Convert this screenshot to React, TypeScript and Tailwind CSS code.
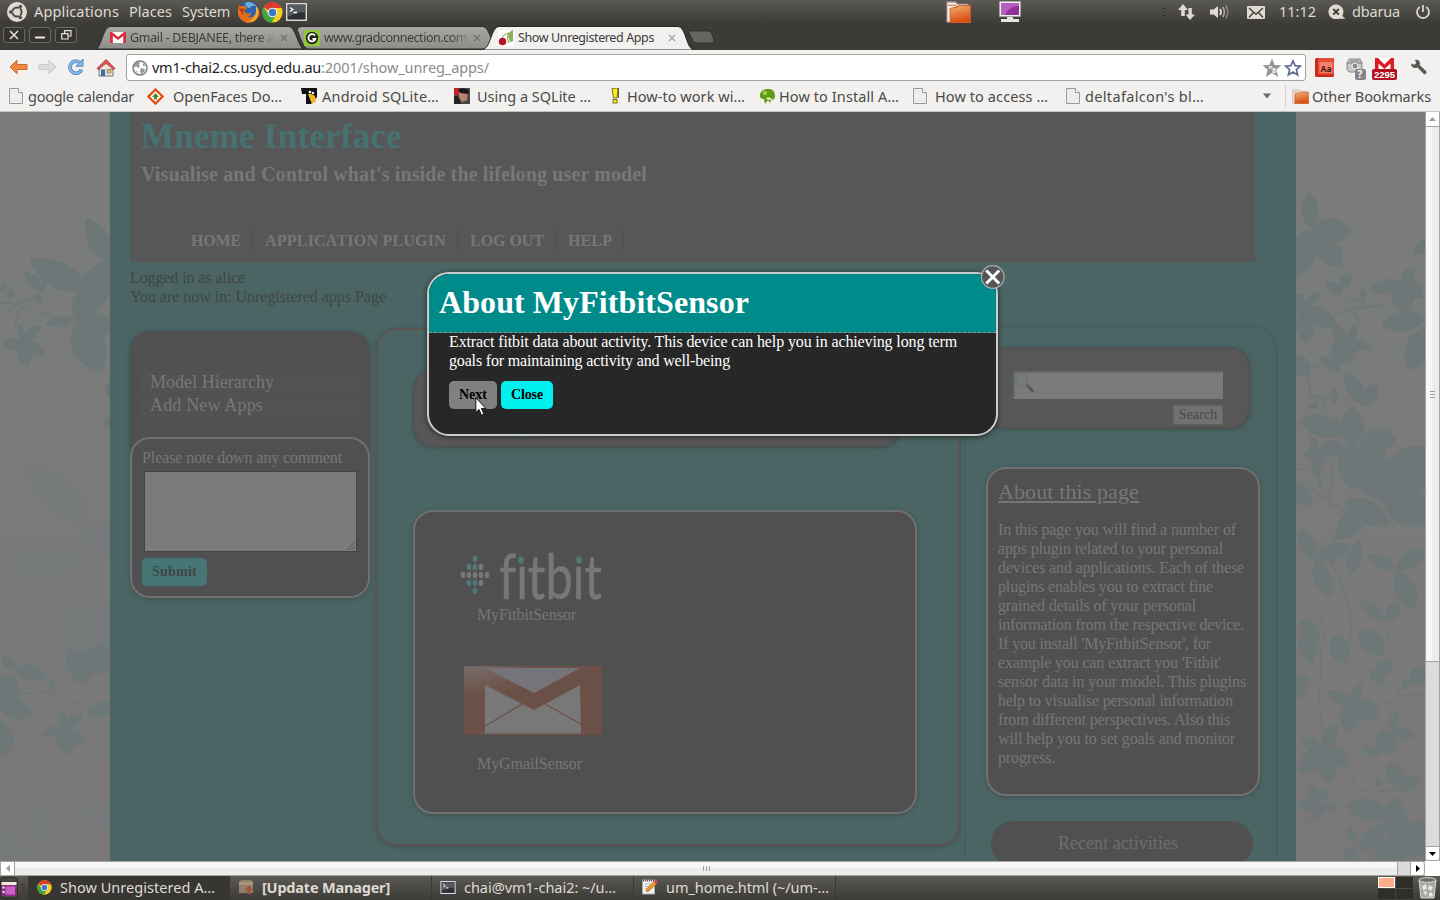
import React, { useLayoutEffect, useRef, useState } from "react";

const UI = "font-['Noto_Sans','Open_Sans',sans-serif]";
const SERIF = "font-['Liberation_Serif',serif]";

/* One line of text, tracked so that it fills the given width. */
function Fit({ w, children, className = "" }: { w: number; children: string; className?: string }) {
  const ref = useRef<HTMLSpanElement>(null);
  const [spacing, setSpacing] = useState(0);
  useLayoutEffect(() => {
    if (ref.current) {
      const natural = ref.current.getBoundingClientRect().width;
      setSpacing((w - natural) / children.length);
    }
  }, []);
  return (
    <span ref={ref} className={"inline-block shrink-0 whitespace-pre " + className} style={{ letterSpacing: spacing }}>
      {children}
    </span>
  );
}

function Gap({ w }: { w: number }) {
  return <span className="shrink-0" style={{ width: w }} />;
}

function ChromeIcon({ size }: { size: number }) {
  return (
    <svg width={size} height={size} viewBox="0 0 20 20" className="shrink-0">
      <circle cx="10" cy="10" r="9.6" fill="#f7cf1e" />
      <path d="M10 10 L1.7 5.2 A9.6 9.6 0 0 1 18.6 5.6 L10 5.8 Z" fill="#dd3b2c" />
      <path d="M1.7 5.2 A9.6 9.6 0 0 0 9.2 19.6 L13.6 12.2 L10 10 L6.3 12 Z" fill="#3fa445" />
      <circle cx="10" cy="10" r="4.6" fill="#f1f1f1" />
      <circle cx="10" cy="10" r="3.6" fill="#3a78c9" />
    </svg>
  );
}

function FirefoxIcon() {
  return (
    <svg width="24" height="24" viewBox="0 0 24 24" className="shrink-0">
      <circle cx="12" cy="12" r="10.5" fill="#2c62ad" />
      <path d="M8 3 Q14 0 19 6 Q14 5 13 8 Q9 8 8 3Z" fill="#69aee6" />
      <path d="M2 5 Q3 7 5 6 Q8 5 10 8 L8 10 Q7 12 9 13 Q12 15 14 12 Q15 15 11 17 Q17 19 19 12 Q20 8 18 5 Q24 10 22 16 Q18 24 10 23 Q0 20 1 10 Z" fill="#e2701a" />
      <path d="M19 6 Q23 11 20 17 Q17 22 11 22 Q19 18 19 12 Z" fill="#f6b52c" />
      <path d="M2 8 Q4 9 6 8 L8 10 Q5 12 7 15 Q4 14 2 8Z" fill="#b8410f" />
    </svg>
  );
}

function TerminalIcon({ w, h }: { w: number; h: number }) {
  return (
    <svg width={w} height={h} viewBox="0 0 21 18" className="shrink-0">
      <rect x="0.7" y="0.7" width="19.6" height="16.6" fill="#2d3133" stroke="#dadada" strokeWidth="1.5" />
      <path d="M2 2 H19 V9 Q10 9 2 14Z" fill="#555a5c" />
      <path d="M4 4.5 L6.8 6.5 L4 8.5 M7.5 9.5 H11" fill="none" stroke="#fff" strokeWidth="1.3" />
    </svg>
  );
}

function FolderIcon({ w, h }: { w: number; h: number }) {
  return (
    <svg width={w} height={h} viewBox="0 0 24 21" className="shrink-0">
      <defs>
        <linearGradient id="fold" x1="0" y1="0" x2="0.3" y2="1">
          <stop offset="0" stopColor="#f4b076" />
          <stop offset="1" stopColor="#d94e12" />
        </linearGradient>
      </defs>
      <path d="M1 20 V1 H9 L11 3 H21 V20Z" fill="#f4efec" stroke="#b9a79c" strokeWidth="1" />
      <path d="M2 4 H9 L11 6" fill="none" stroke="#e06a2c" strokeWidth="1" />
      <path d="M4 20.5 V7 L10 6 L12 4.5 H23.5 V20.5Z" fill="url(#fold)" stroke="#cf5a22" strokeWidth="1" />
    </svg>
  );
}

function PageIcon() {
  return (
    <svg width="14" height="16" viewBox="0 0 14 16" className="shrink-0">
      <path d="M0.5 0.5 H9.5 L13.5 4.5 V15.5 H0.5Z" fill="#ededed" stroke="#9a9a9a" />
      <path d="M9.5 0.5 V4.5 H13.5" fill="#fff" stroke="#9a9a9a" />
    </svg>
  );
}

function GmailIcon({ w, h }: { w: number; h: number }) {
  return (
    <svg width={w} height={h} viewBox="0 0 16 12" preserveAspectRatio="none" className="shrink-0">
      <rect width="16" height="12" rx="0.7" fill="#fff" />
      <path d="M0 12 V0 H2 L8 5.5 L14 0 H16 V12 H13.2 V4.3 L8 8.8 L2.8 4.3 V12Z" fill="#d9303a" />
    </svg>
  );
}

function SystemPanel() {
  return (
    <div className={"flex h-6 items-center overflow-hidden bg-gradient-to-b from-[#5b5953] to-[#3c3b37] text-[14.5px] leading-6 text-[#dfdbd2] " + UI}>
      <Gap w={7} />
      <svg width="20" height="20" viewBox="0 0 20 20" className="shrink-0">
        <circle cx="10" cy="10" r="10" fill="#dfdbd2" />
        <circle cx="10" cy="10" r="4.6" fill="none" stroke="#4b4943" strokeWidth="2" />
        <path d="M10 10 L3 10 M10 10 L14 3.5 M10 10 L14 16.5" stroke="#dfdbd2" strokeWidth="1" />
        <circle cx="3.7" cy="10" r="1.7" fill="#4b4943" />
        <circle cx="13.4" cy="4.4" r="1.7" fill="#4b4943" />
        <circle cx="13.4" cy="15.6" r="1.7" fill="#4b4943" />
      </svg>
      <Gap w={7} />
      <Fit w={85} className="-mt-0.5">Applications</Fit>
      <Gap w={10} />
      <Fit w={43} className="-mt-0.5">Places</Fit>
      <Gap w={10} />
      <Fit w={48} className="-mt-0.5">System</Fit>
      <Gap w={7} />
      <FirefoxIcon />
      <Gap w={1} />
      <ChromeIcon size={21} />
      <Gap w={3} />
      <TerminalIcon w={21} h={18} />
      <Gap w={639} />
      <FolderIcon w={25} h={22} />
      <Gap w={28} />
      <svg width="22" height="22" viewBox="0 0 22 22" className="shrink-0">
        <rect x="0.5" y="0.5" width="21" height="15" fill="#f0f0ee" stroke="#aaa" strokeWidth="0.6" />
        <rect x="2" y="2" width="18" height="12" fill="#8f3296" />
        <path d="M2 2 H20 V5 Q10 5 6 14 H2Z" fill="#b45fc0" />
        <path d="M8 16 H14 V18 H20 V21 H2 V18 H8Z" fill="#e3e3e0" />
      </svg>
      <span className="flex-1" />
      <svg width="5" height="10" viewBox="0 0 5 10" className="shrink-0"><path d="M0 1.5H4 M0 5H4 M0 8.5H4" stroke="#36352f" /></svg>
      <Gap w={10} />
      <svg width="19" height="18" viewBox="0 0 19 18" className="shrink-0" fill="#dfdbd2">
        <path d="M6 1 L11 7 H7.8 V13 H4.2 V7 H1Z M13 17 L8.5 11.5 H11.5 V5 H14.8 V11.5 H18Z" />
      </svg>
      <Gap w={14} />
      <svg width="20" height="16" viewBox="0 0 20 16" className="shrink-0" fill="none" stroke="#dfdbd2">
        <path d="M0 5.5 H3.5 L8 2 V14 L3.5 10.5 H0Z" fill="#dfdbd2" stroke="none" />
        <path d="M10 5 Q12 8 10 11" strokeWidth="1.8" />
        <path d="M12.8 3 Q16 8 12.8 13" strokeWidth="1.6" opacity=".65" />
        <path d="M15.6 1 Q20 8 15.6 15" strokeWidth="1.5" opacity=".4" />
      </svg>
      <Gap w={17} />
      <svg width="18" height="13" viewBox="0 0 18 13" className="shrink-0">
        <rect width="18" height="13" rx="1" fill="#dfdbd2" />
        <path d="M2 2 L9 8.3 L16 2 M2 11.5 L6.5 6.5 M16 11.5 L11.5 6.5" fill="none" stroke="#403f3a" strokeWidth="1.3" />
      </svg>
      <Gap w={14} />
      <Fit w={37} className="-mt-0.5">11:12</Fit>
      <Gap w={12} />
      <svg width="18" height="16" viewBox="0 0 18 16" className="shrink-0">
        <path d="M8 0.5 A7.5 7.3 0 1 1 7.9 0.5 M13 11 L17.5 14.8 H7Z" fill="#dfdbd2" />
        <path d="M5.2 5 L10.8 10.6 M10.8 5 L5.2 10.6" stroke="#403f3a" strokeWidth="2" />
      </svg>
      <Gap w={6} />
      <Fit w={48} className="-mt-0.5">dbarua</Fit>
      <Gap w={15} />
      <svg width="16" height="16" viewBox="0 0 16 16" className="shrink-0" fill="none" stroke="#dfdbd2" strokeWidth="1.7">
        <path d="M4.8 3 A6 6 0 1 0 11.2 3 M8 1 V8" />
      </svg>
      <Gap w={9} />
    </div>
  );
}

function WindowButton({ children }: { children: React.ReactNode }) {
  return (
    <span className="mr-1 flex h-[16px] w-[22px] shrink-0 items-center justify-center rounded-[3px] border border-[#6a6963] bg-[#35342f]">
      <svg width="14" height="12" viewBox="0 0 14 12" fill="none" stroke="#e8e4dc" strokeWidth="1.5">{children}</svg>
    </span>
  );
}

function TabClose({ color }: { color: string }) {
  return (
    <svg width="8" height="8" viewBox="0 0 8 8" className="shrink-0"><path d="M1 1 L7 7 M7 1 L1 7" stroke={color} strokeWidth="1.4" /></svg>
  );
}

function TabStrip() {
  return (
    <div className={"relative flex h-[26px] bg-[#3c3b37] text-[12.5px] leading-[24px] " + UI}>
      <svg className="absolute left-0 top-0" width="720" height="26" viewBox="0 0 720 26">
        <defs>
          <linearGradient id="tabg" x1="0" y1="0" x2="0" y2="1">
            <stop offset="0" stopColor="#a9a7a4" />
            <stop offset="1" stopColor="#8f8d8a" />
          </linearGradient>
        </defs>
        <path d="M96 25 C101 24 103 3 110 2.5 H289 C296 3 298 24 304 25Z" fill="url(#tabg)" stroke="#2b2a27" />
        <path d="M308 25 C302 24 299 8 297 6 C298 3 300 2.5 303 2.5 H483 C490 3 492 24 498 25Z" fill="url(#tabg)" stroke="#2b2a27" />
        <path d="M482 26 C491 25 491 2.5 499 2.5 H678 C686 2.5 686 25 694 26Z" fill="#f2f1f0" stroke="#2b2a27" />
        <path d="M689 7 H708 Q711 7 712 10 L714 17 Q714 19 711 19 H697 Q694 19 693 17 L689 9Z" fill="#666560" stroke="#2b2a27" strokeWidth=".8" />
      </svg>
      <div className="relative flex h-[26px] items-center pt-px">
        <div className="flex self-start pl-[3px] pt-[2px]">
          <WindowButton><path d="M3 2 L11 10 M11 2 L3 10" /></WindowButton>
          <WindowButton><path d="M2 8.5 H12" strokeWidth="2" /></WindowButton>
          <WindowButton><path d="M2.7 4.7 H9 V10 H2.7Z M5.5 4 V1.7 H12 V7 H9.5" strokeWidth="1.2" /></WindowButton>
        </div>
        <Gap w={29} />
        <GmailIcon w={16} h={11} />
        <Gap w={4} />
        <span className="w-[144px] shrink-0 overflow-hidden bg-gradient-to-r from-[#3b3a38] from-90% to-transparent bg-clip-text text-transparent"><Fit w={144}>Gmail - DEBJANEE, there a</Fit></span>
        <Gap w={6} />
        <TabClose color="#747370" />
        <Gap w={16} />
        <svg width="16" height="16" viewBox="0 0 16 16" className="shrink-0">
          <rect width="16" height="16" fill="#93c83d" />
          <circle cx="8" cy="8" r="6.2" fill="#20251a" />
          <path d="M11 5.8 A3.6 3.6 0 1 0 11.4 9 H8.5" fill="none" stroke="#fff" strokeWidth="1.8" />
        </svg>
        <Gap w={4} />
        <span className="w-[144px] shrink-0 overflow-hidden bg-gradient-to-r from-[#3b3a38] from-88% to-[#8a8986] bg-clip-text text-transparent"><Fit w={143}>www.gradconnection.com</Fit></span>
        <Gap w={5} />
        <TabClose color="#747370" />
        <Gap w={17} />
        <svg width="16" height="16" viewBox="0 0 16 16" className="shrink-0">
          <rect width="16" height="16" fill="#fff" />
          <path d="M4 9 Q5 4 11 3 M11 13 Q8 8 11 3" stroke="#7aa04a" fill="none" />
          <path d="M9 5 Q13 0 15 0 V11 Q12 14 11 8Z" fill="#8fae5d" />
          <circle cx="4.5" cy="11.5" r="3.8" fill="#b5182b" />
        </svg>
        <Gap w={4} />
        <Fit w={136} className="text-[#3c3b39]">Show Unregistered Apps</Fit>
        <Gap w={14} />
        <TabClose color="#a5a4a2" />
      </div>
    </div>
  );
}

function Toolbar() {
  return (
    <div className={"flex h-[34px] shrink-0 items-center bg-[#f2f1f0] " + UI}>
      <Gap w={9} />
      <svg width="19" height="16" viewBox="0 0 19 16" className="shrink-0"><path d="M1 8 L8 1.2 V5.5 H18 V10.5 H8 V14.8Z" fill="#ee8743" stroke="#cf6a2c" strokeLinejoin="round" /></svg>
      <Gap w={10} />
      <svg width="19" height="16" viewBox="0 0 19 16" className="shrink-0"><path d="M18 8 L11 1.2 V5.5 H1 V10.5 H11 V14.8Z" fill="#dddcda" stroke="#cccbc9" strokeLinejoin="round" /></svg>
      <Gap w={10} />
      <svg width="18" height="18" viewBox="0 0 18 18" className="shrink-0" fill="none">
        <path d="M14.5 11.5 A6 6 0 1 1 12.5 4.4" stroke="#3d7ab4" strokeWidth="3.6" />
        <path d="M16 1 V8.3 H9Z" fill="#80b7e8" stroke="#3d7ab4" strokeWidth=".8" />
        <path d="M14.5 11.5 A6 6 0 1 1 12.5 4.4" stroke="#80b7e8" strokeWidth="2.4" />
      </svg>
      <Gap w={11} />
      <svg width="20" height="19" viewBox="0 0 20 19" className="shrink-0">
        <path d="M3 9 H17 V18 H3Z" fill="#e9e6de" stroke="#7a766d" />
        <path d="M1 10.5 L10 1.5 L19 10.5 L17 11.5 L10 6 L3 11.5Z" fill="#e05252" stroke="#a03030" strokeWidth=".8" />
        <path d="M4 10.5 L10 6 L16 10.5Z" fill="#e9e6de" />
        <rect x="5" y="11.5" width="4" height="6.5" fill="#3f6aa7" />
        <rect x="11" y="11.5" width="4" height="3.5" fill="#efb75a" stroke="#7a766d" strokeWidth=".7" />
      </svg>
      <Gap w={10} />
      <div className="mt-px flex h-[27px] w-[1180px] shrink-0 items-center rounded-[3px] border border-[#a5a19c] bg-white pl-[5px] text-[14.5px]">
        <svg width="16" height="16" viewBox="0 0 16 16" className="shrink-0">
          <circle cx="8" cy="8" r="7" fill="#fff" stroke="#7c7c7c" strokeWidth="1.5" />
          <path d="M3 3 Q7 1 8 3 L7 5 L8 7 L6 8 L4 6 L2 8 Q1 5 3 3 M9 8 L13 9 L12 12 L9 14 L8 11Z M11 3 L14 6 L11 6Z M3 10 L5 11 L6 14Z" fill="#999" />
        </svg>
        <Gap w={4} />
        <Fit w={169} className="text-[#222]">vm1-chai2.cs.usyd.edu.au</Fit>
        <Fit w={168} className="text-[#8b8b8b]">:2001/show_unreg_apps/</Fit>
        <span className="flex-1" />
        <svg width="20" height="20" viewBox="0 0 20 20" className="shrink-0">
          <path d="M10 0.5 L12.7 7 L19.5 7.3 L14.3 11.8 L16.2 19 L10 15 L3.8 19 L5.7 11.8 L0.5 7.3 L7.3 7Z" fill="#949494" />
          <text x="6.5" y="11" fontSize="6" fontWeight="bold" fill="#fff">n</text>
          <text x="10" y="15" fontSize="7" fontWeight="bold" fill="#fff">8</text>
        </svg>
        <Gap w={2} />
        <svg width="18" height="18" viewBox="0 0 18 18" className="shrink-0"><path d="M9 1.8 L11.2 6.6 L16.4 7.1 L12.4 10.6 L13.6 15.9 L9 13.1 L4.4 15.9 L5.6 10.6 L1.6 7.1 L6.8 6.6Z" fill="#fff" stroke="#5f6b90" strokeWidth="1.7" /></svg>
        <Gap w={3} />
      </div>
      <Gap w={9} />
      <svg width="19" height="19" viewBox="0 0 19 19" className="shrink-0">
        <rect width="19" height="19" rx="1.5" fill="#cb2b1b" />
        <rect x="3" y="0" width="16" height="16.5" fill="#e64c37" />
        <rect x="4.5" y="4" width="13" height="11" fill="#f0826d" />
        <text x="5.5" y="14" fontSize="8.5" fontWeight="bold" fill="#4a1310" textLength="11">Aa</text>
      </svg>
      <Gap w={12} />
      <svg width="20" height="22" viewBox="0 0 20 22" className="mt-1 shrink-0">
        <path d="M3 1 H14 L16 5 V12 L13 14 H3 L1 11 V5Z" fill="#c9c9c9" stroke="#8b8b8b" />
        <path d="M1 5 H16 M4 3 H13" stroke="#777" />
        <circle cx="9" cy="8" r="3" fill="#8b8b8b" stroke="#eee" />
        <rect x="9" y="11" width="11" height="11" rx="2" fill="#858585" />
        <text x="11.5" y="20" fontSize="10" fontWeight="bold" fill="#fff">?</text>
      </svg>
      <Gap w={6} />
      <svg width="25" height="22" viewBox="0 0 25 22" className="mt-1 shrink-0">
        <rect x="3" width="19" height="14" fill="#fff" />
        <path d="M3 12 V0 H6 L12.5 6.5 L19 0 H22 V12 H18.5 V5.5 L12.5 11 L6.5 5.5 V12Z" fill="#e01a22" />
        <rect y="11" width="25" height="11" rx="2" fill="#b01020" />
        <text x="2" y="20" fontSize="9.5" fontWeight="bold" fill="#fff" textLength="21" fontFamily="Liberation Sans">2295</text>
      </svg>
      <Gap w={13} />
      <svg width="18" height="17" viewBox="0 0 17 17" className="shrink-0">
        <path d="M1 4.5 L3.8 5.8 L5.8 3.8 L4.3 1 Q8 0 9.3 3 Q9.8 4.8 9.2 6 L16 12.5 Q16.5 14.8 13.8 15.5 L7 8.5 Q3 10 1 7 Q.5 6 1 4.5Z" fill="#5d5b58" />
      </svg>
    </div>
  );
}

function Bookmarks() {
  return (
    <div className={"flex h-[28px] shrink-0 items-center border-b border-[#c3c1be] bg-[#f2f1f0] pb-[3px] text-[14.5px] leading-[24px] text-[#4b4a48] " + UI}>
      <Gap w={9} />
      <PageIcon />
      <Gap w={5} />
      <Fit w={106}>google calendar</Fit>
      <Gap w={13} />
      <svg width="17" height="17" viewBox="0 0 17 17" className="shrink-0">
        <path d="M8.5 1.5 L15.5 8.5 L8.5 15.5 L1.5 8.5Z" fill="#fff" stroke="#e2501a" strokeWidth="2.4" />
        <path d="M8.5 5 L12 9 H10 V11.5 H7 V9 H5Z" fill="#4c8a1e" />
      </svg>
      <Gap w={9} />
      <Fit w={109}>OpenFaces Do…</Fit>
      <Gap w={19} />
      <svg width="16" height="16" viewBox="0 0 16 16" className="shrink-0">
        <rect width="16" height="16" fill="#f2f1f0" />
        <path d="M0 0 H16 V9 L10 16 H5 L5 6 H1Z" fill="#111" />
        <path d="M7 6 Q10 5 14 8 L15 13 L11 16 L9 11Z" fill="#f2b81f" />
        <circle cx="9" cy="4" r="1.3" fill="#fff" /><circle cx="12" cy="5" r="1.2" fill="#fff" />
      </svg>
      <Gap w={5} />
      <Fit w={117}>Android SQLite…</Fit>
      <Gap w={15} />
      <svg width="16" height="16" viewBox="0 0 16 16" className="shrink-0">
        <rect width="16" height="16" fill="#4b4747" />
        <path d="M0 0 H5 V7 H0Z" fill="#c71f2a" />
        <path d="M5 3 Q10 -1 14 4 L13 12 L8 14 L5 9Z" fill="#b98472" />
        <path d="M4 2 Q10 -2 15 3 L14 6 L6 5Z" fill="#1d1616" />
        <path d="M0 8 H4 L7 16 H0Z" fill="#25211f" />
      </svg>
      <Gap w={7} />
      <Fit w={114}>Using a SQLite …</Fit>
      <Gap w={20} />
      <svg width="9" height="16" viewBox="0 0 9 16" className="shrink-0">
        <path d="M1 0.5 L7 0 L6 10 H2.5Z" fill="#ffe81c" stroke="#74781b" /><path d="M7.5 0 V10" stroke="#4b5a1e" /><rect x="2" y="11.5" width="4" height="3.5" fill="#ffe81c" stroke="#74781b" />
      </svg>
      <Gap w={7} />
      <Fit w={118}>How-to work wi…</Fit>
      <Gap w={14} />
      <svg width="17" height="17" viewBox="0 0 17 17" className="shrink-0">
        <path d="M8 1 Q16 0 16 8 Q16 12 12 12 L11 15 L9 12 L6 16 L5 11 Q0 11 1 6 Q3 1 8 1Z" fill="#5f9c10" />
        <path d="M7 11 Q9 8 11 10 T15 9 L12 12Z" fill="#f4f4ea" />
        <circle cx="6" cy="5" r="2.2" fill="#9fc85f" />
      </svg>
      <Gap w={3} />
      <Fit w={120}>How to Install A…</Fit>
      <Gap w={14} />
      <PageIcon />
      <Gap w={8} />
      <Fit w={113}>How to access …</Fit>
      <Gap w={18} />
      <PageIcon />
      <Gap w={5} />
      <Fit w={119}>deltafalcon's bl…</Fit>
      <Gap w={59} />
      <svg width="8" height="6" viewBox="0 0 8 6" className="shrink-0"><path d="M0 0.5 H8 L4 5.5Z" fill="#6b6966" /></svg>
      <Gap w={14} />
      <span className="h-[22px] w-px shrink-0 bg-[#d3d1ce]" />
      <Gap w={6} />
      <FolderIcon w={17} h={15} />
      <Gap w={3} />
      <Fit w={119}>Other Bookmarks</Fit>
    </div>
  );
}

/* Leaves: base x, base y, tip x, tip y, width. */
type Leaf = [number, number, number, number, number];

const leaves: Leaf[] = [
  [112, 264, 86, 218, 24], [90, 291, 29, 260, 28], [44, 293, 24, 271, 12], [76, 320, 112, 258, 34], [78, 322, 84, 288, 20],
  [76, 319, 45, 324, 12], [76, 320, 102, 372, 36], [74, 318, 118, 330, 22], [36, 292, 47, 280, 9], [34, 294, 40, 304, 10],
  [22, 340, 20, 324, 8], [22, 340, 41, 326, 11], [22, 340, 44, 355, 13], [22, 338, 27, 366, 17], [22, 340, 2, 348, 12], [10, 300, 10, 288, 7], [0, 292, 5, 284, 6],
  [118, 400, 108, 382, 16], [118, 418, 102, 424, 10],
  [86, 672, 70, 649, 12], [84, 672, 112, 648, 32], [82, 670, 70, 649, 18], [84, 682, 66, 660, 12], [14, 669, 47, 677, 17], [14, 670, 3, 655, 13],
  [-6, 710, 14, 674, 34], [0, 708, 34, 712, 21], [-4, 718, 7, 757, 26], [52, 689, 52, 678, 7], [118, 706, 86, 713, 17],
  [64, 730, 62, 711, 10], [62, 730, 83, 714, 12], [64, 730, 86, 744, 14], [64, 728, 68, 755, 20], [66, 728, 43, 735, 11], [78, 684, 90, 670, 12],
  [1311, 229, 1309, 192, 19], [1311, 230, 1352, 232, 28], [1312, 232, 1342, 267, 26], [1310, 230, 1290, 278, 34], [1338, 292, 1351, 272, 12], [1341, 295, 1326, 282, 11],
  [1363, 300, 1363, 289, 7], [1402, 283, 1369, 290, 15], [1402, 283, 1414, 268, 13], [1400, 283, 1422, 295, 22], [1402, 285, 1404, 312, 24], [1426, 318, 1381, 325, 22], [1432, 325, 1408, 370, 30], [1430, 240, 1414, 254, 14],
  [1306, 306, 1320, 292, 10], [1306, 306, 1288, 298, 18], [1304, 306, 1307, 343, 22], [1304, 308, 1337, 326, 20], [1350, 342, 1355, 323, 10], [1350, 340, 1372, 349, 12], [1346, 344, 1333, 324, 13], [1330, 356, 1358, 346, 28],
  [1342, 371, 1319, 356, 10], [1290, 356, 1310, 375, 20], [1362, 402, 1346, 372, 18], [1364, 403, 1377, 384, 15], [1372, 405, 1356, 395, 12], [1335, 404, 1335, 387, 7], [1310, 408, 1318, 404, 6],
  [1353, 448, 1352, 406, 26], [1360, 442, 1397, 438, 24], [1361, 443, 1388, 467, 26], [1348, 432, 1298, 420, 24], [1318, 450, 1310, 437, 10], [1318, 450, 1303, 457, 11], [1318, 450, 1317, 478, 15], [1318, 452, 1344, 446, 18],
  [1350, 440, 1352, 490, 28], [1350, 445, 1382, 500, 34], [1382, 490, 1438, 450, 48], [1380, 495, 1440, 520, 40], [1345, 500, 1390, 525, 26], [1292, 482, 1312, 508, 18], [1320, 488, 1320, 478, 7], [1370, 505, 1335, 540, 24],
  [1315, 560, 1300, 530, 18], [1316, 560, 1350, 545, 20], [1316, 560, 1330, 598, 20], [1360, 540, 1350, 575, 16], [1395, 570, 1368, 555, 14], [1396, 570, 1425, 550, 18], [1396, 570, 1415, 610, 22], [1385, 620, 1360, 600, 14], [1386, 620, 1400, 602, 14], [1300, 620, 1320, 640, 16],
  [1305, 630, 1311, 664, 20], [1335, 635, 1345, 664, 22], [1360, 630, 1383, 655, 24], [1372, 678, 1394, 660, 14], [1385, 685, 1369, 670, 12], [1410, 684, 1428, 668, 18], [1405, 690, 1405, 679, 7],
  [1352, 704, 1328, 691, 14], [1352, 704, 1361, 682, 11], [1350, 700, 1349, 733, 22], [1350, 702, 1380, 716, 22], [1391, 728, 1397, 712, 11], [1391, 728, 1414, 738, 13], [1375, 748, 1398, 736, 28], [1380, 756, 1362, 747, 10], [1290, 700, 1306, 675, 20],
  [1322, 750, 1337, 724, 15], [1322, 750, 1300, 739, 14], [1322, 750, 1299, 772, 20], [1322, 750, 1331, 783, 20], [1322, 748, 1350, 765, 20],
  [1405, 791, 1388, 762, 19], [1405, 791, 1419, 775, 13], [1378, 788, 1378, 779, 7], [1314, 803, 1312, 784, 13], [1314, 803, 1328, 790, 12], [1314, 803, 1297, 807, 13], [1314, 803, 1320, 820, 12], [1318, 808, 1338, 806, 9],
  [1395, 845, 1395, 796, 26], [1390, 815, 1346, 805, 24], [1352, 842, 1350, 826, 10], [1356, 845, 1345, 862, 14], [1360, 850, 1385, 825, 20], [1380, 840, 1400, 872, 34], [1400, 850, 1436, 830, 34],
];

const faintLeaves: Leaf[] = [
  [87, 523, 28, 465, 34], [84, 560, 4, 565, 34], [45, 850, 42, 800, 34], [110, 830, 85, 805, 26], [30, 860, -5, 830, 26], [110, 520, 94, 560, 40], [60, 650, 120, 610, 60],
];

const branches = [
  "M42 296 C25 303 15 300 8 312 M0 303 C15 300 30 316 76 320 M20 310 Q14 318 16 326",
  "M14 690 C30 698 45 690 54 690 C66 690 70 682 80 680 M52 692 C60 702 78 700 94 709 M62 702 Q54 708 60 722",
  "M1338 294 C1350 304 1362 296 1365 306 M1335 315 C1355 303 1380 311 1402 299 M1350 310 Q1361 315 1358 325 M1426 296 Q1410 300 1396 301",
  "M1300 365 C1318 370 1325 364 1336 364 M1305 375 C1314 392 1306 400 1318 396 C1332 404 1350 396 1364 403 M1334 398 V388 M1320 396 Q1316 404 1302 412 M1318 396 Q1326 402 1326 414",
  "M1330 460 C1338 480 1326 490 1330 508 M1296 468 Q1305 472 1312 468 M1296 484 C1315 490 1330 500 1345 512",
  "M1320 545 C1340 580 1355 600 1350 640 M1395 575 C1405 600 1390 620 1386 640 M1296 590 Q1320 600 1325 640",
  "M1320 640 C1322 690 1316 700 1324 740 M1378 705 C1395 702 1395 692 1425 696 M1398 696 L1400 686 M1296 732 C1310 725 1314 728 1320 724",
  "M1350 765 C1356 790 1356 785 1360 790 C1375 795 1390 788 1405 792 M1358 792 Q1340 795 1342 805 M1296 826 C1312 818 1318 812 1322 806 M1378 840 V862",
];

function leafPath([x1, y1, x2, y2, w]: Leaf) {
  const dx = x2 - x1, dy = y2 - y1, l = Math.hypot(dx, dy) || 1;
  const nx = (-dy / l) * w * 0.62, ny = (dx / l) * w * 0.62;
  const a = 0.28, b = 0.7;
  return `M${x1} ${y1} C${x1 + dx * a + nx} ${y1 + dy * a + ny} ${x1 + dx * b + nx} ${y1 + dy * b + ny} ${x2} ${y2} C${x1 + dx * b - nx} ${y1 + dy * b - ny} ${x1 + dx * a - nx} ${y1 + dy * a - ny} ${x1} ${y1}Z`;
}

function Foliage() {
  return (
    <svg className="absolute inset-0" width="1425" height="749" viewBox="0 112 1425 749">
      <g fill="#76797a">{faintLeaves.map((l, i) => <path key={i} d={leafPath(l)} />)}</g>
      <g fill="#6d7777">{leaves.map((l, i) => <path key={i} d={leafPath(l)} />)}<circle cx="1420" cy="834" r="14" /></g>
      <g fill="none" stroke="#6d7777" strokeWidth="1.4">{branches.map((d, i) => <path key={i} d={d} />)}</g>
    </svg>
  );
}

function FitbitLogo() {
  const dots: [number, number, boolean][] = [
    [14, 5, true], [8, 13, true], [14, 13, true], [20, 13, false],
    [2, 21, false], [8, 21, false], [14, 21, false], [20, 21, false], [26, 21, false],
    [8, 29, true], [14, 29, true], [20, 29, false], [14, 37, true],
  ];
  return (
    <svg width="142" height="52" viewBox="0 0 142 52" className="overflow-visible">
      {dots.map(([x, y, teal], i) => <ellipse key={i} cx={x} cy={y + 5} rx="2.3" ry="3.3" fill={teal ? "#527776" : "#777"} />)}
      <text x="38" y="50" fontFamily="Lato" fontSize="62" fill="#777" stroke="#777" strokeWidth="0.6" textLength="103" lengthAdjust="spacingAndGlyphs" className="[font-variant-ligatures:none]">fitbit</text>
      <rect x="55" y="2" width="10" height="13" fill="#505050" />
      <rect x="113" y="2" width="10" height="13" fill="#505050" />
      <ellipse cx="60" cy="11" rx="2.8" ry="3.8" fill="#527776" />
      <ellipse cx="118" cy="11" rx="2.8" ry="3.8" fill="#527776" />
    </svg>
  );
}

function GmailLogo() {
  return (
    <svg width="138" height="69" viewBox="0 0 138 69">
      <defs>
        <radialGradient id="shine" cx="0.05" cy="0" r="0.45">
          <stop offset="0" stopColor="#786c68" />
          <stop offset="1" stopColor="#6b5047" />
        </radialGradient>
      </defs>
      <rect width="138" height="69" fill="url(#shine)" />
      <path d="M21 2 H116 L70 27Z" fill="#757579" />
      <path d="M21 19 L70 44 L116 19 L117 67.5 H21Z" fill="#787878" />
      <path d="M21 60 L58 38 M117 58 L81 38" stroke="#6b5047" strokeWidth="1.3" />
    </svg>
  );
}

function LeftColumn() {
  return (
    <div className="ml-5 mt-1 h-[267px] w-[240px] shrink-0 rounded-[20px] bg-[#505050] shadow-[0_1px_4px_#3f4f4f]">
      <div className="h-[106px] px-[10px] pt-[40px] text-[18px] leading-[22px] text-[#777]">
        <div className="mb-px h-[22px] bg-[#525252] pl-[10px]"><Fit w={124}>Model Hierarchy</Fit></div>
        <div className="h-[22px] bg-[#525252] pl-[10px]"><Fit w={113}>Add New Apps</Fit></div>
      </div>
      <div className="h-[161px] rounded-[20px] border-2 border-[#707070] bg-[#505050] pl-[10px] pt-[9px] leading-[19px] text-[#777]">
        <div className="h-[23px]"><Fit w={200}>Please note down any comment</Fit></div>
        <div className="ml-[2px] flex h-[81px] w-[213px] items-end justify-end border border-[#444] bg-[#7b7b7b]">
          <svg width="10" height="10" viewBox="0 0 10 10"><path d="M1 9 L9 1 M5 9 L9 5" stroke="#555" /></svg>
        </div>
        <div className="mt-[6px] flex h-[28px] w-[65px] items-center justify-center rounded-[5px] bg-[#467675] pb-px text-[14px] font-bold text-[#414747]">
          <Fit w={45}>Submit</Fit>
        </div>
      </div>
    </div>
  );
}

function AppTile({ label, w, className, children }: { label: string; w: number; className: string; children: React.ReactNode }) {
  return (
    <div className={"w-[152px] rounded-[20px] border border-[#525252] " + className}>
      {children}
      <div className="h-[19px] pl-[20px] leading-[19px]"><Fit w={w}>{label}</Fit></div>
    </div>
  );
}

function CenterColumn() {
  return (
    <div className="ml-[6px] mt-px h-[518px] w-[584px] shrink-0 rounded-[20px] border-2 border-[#5a5353] pl-[35px] pt-[40px] shadow-[0_1px_4px_#3f5555]">
      <div className="flex h-[77px] w-[488px] items-end rounded-[20px] border-2 border-[#525252] bg-[#575757] pb-[3px] pl-[76px] text-[20px] font-bold leading-[22px] text-[#4b6c6b] shadow-[0_1px_4px_#3f4f4f]">model</div>
      <div className="mt-[63px] h-[304px] w-[504px] rounded-[20px] border-2 border-[#707070] bg-[#505050] pl-[41px] pt-[36px] text-[#777] shadow-[0_1px_4px_#3f4f4f]">
        <AppTile label="MyFitbitSensor" w={99} className="h-[79px]">
          <div className="h-[56px] pl-[4px]"><FitbitLogo /></div>
        </AppTile>
        <AppTile label="MyGmailSensor" w={105} className="mt-[21px] h-[129px]">
          <div className="h-[105px] pl-[7px] pt-[17px]"><GmailLogo /></div>
        </AppTile>
      </div>
    </div>
  );
}

const aboutLines: [string, number][] = [
  ["In this page you will find a number of", 238], ["apps plugin related to your personal", 225], ["devices and applications. Each of these", 246],
  ["plugins enables you to extract fine", 215], ["grained details of your personal", 198], ["information from the respective device.", 246],
  ["If you install 'MyFitbitSensor', for", 213], ["example you can extract you 'Fitbit'", 223], ["sensor data in your model. This plugins", 248],
  ["help to visualise personal information", 235], ["from different perspectives. Also this", 232], ["will help you to set goals and monitor", 237], ["progress.", 57],
];

function RightColumn() {
  return (
    <div className="ml-[5px] mt-[-1px] h-[560px] w-[312px] shrink-0 rounded-[24px] border border-[#465d5d] pl-[20px] pt-[20px] shadow-[0_0_2px_#465d5d]">
      <div className="h-[82px] w-[264px] rounded-[20px] border-2 border-[#525252] bg-[#575757] pl-[25px] pt-[22px] shadow-[0_1px_4px_#3f4f4f]">
        <div className="h-[28px] w-[210px] border-2 border-b-[#7a7a7a] border-l-[#666] border-r-[#7a7a7a] border-t-[#686868] bg-[#7b7b7b]">
          <svg width="20" height="21" viewBox="0 0 20 21">
            <circle cx="7" cy="7.5" r="6" fill="#767b7b" stroke="#6b6f6f" strokeWidth="1.2" />
            <path d="M12 12 L18.5 19" stroke="#585858" strokeWidth="2.6" />
          </svg>
        </div>
        <div className="ml-[160px] mt-[6px] flex h-[20px] w-[50px] items-center justify-center border border-[#626262] bg-[#717171] text-[14px] leading-[18px] text-[#484848]"><Fit w={39}>Search</Fit></div>
      </div>
      <div className="mt-[38px] h-[329px] w-[274px] rounded-[20px] border-2 border-[#707070] bg-[#505050] pl-[10px] pt-[9px] text-[#777] shadow-[0_1px_4px_#3f4f4f]">
        <div className="mb-[15px] h-[27px] text-[22px] leading-[27px]"><Fit w={141} className="underline underline-offset-2">About this page</Fit></div>
        {aboutLines.map(([t, w]) => <div key={t} className="h-[19px] leading-[19px]"><Fit w={w}>{t}</Fit></div>)}
      </div>
      <div className="ml-[5px] mt-[25px] flex h-[45px] w-[262px] justify-center rounded-[22px] bg-[#505050] pt-[11px] text-[18px] leading-[22px] text-[#6e6e6e]"><Fit w={120} className="mr-[8px]">Recent activities</Fit></div>
    </div>
  );
}

function NavItem({ children, w }: { children: string; w: number }) {
  return (
    <span className="mr-[12px] flex h-[24px] items-center border-r border-[#515151] pr-[11px]"><Fit w={w}>{children}</Fit></span>
  );
}

function Modal() {
  return (
    <div className="absolute left-[427px] top-[160px] h-[164px] w-[571px] rounded-[22px] border-2 border-[#ccc] bg-[#272727] text-white shadow-[0_1px_5px_#222]">
      <div className="h-[59px] rounded-t-[20px] border-b border-dashed border-[#a08f8f] bg-[#008b8b] pl-[10px] pt-[9px] text-[32px] font-bold leading-[38px]">
        <Fit w={310}>About MyFitbitSensor</Fit>
      </div>
      <div className="pl-[20px] leading-[19px]">
        <div className="-mt-px h-[19px]"><Fit w={508}>Extract fitbit data about activity. This device can help you in achieving long term</Fit></div>
        <div className="h-[19px]"><Fit w={281}>goals for maintaining activity and well-being</Fit></div>
        <div className="mt-[11px] flex gap-1 text-[14px] font-bold text-black">
          <div className="flex h-[28px] w-[48px] items-center justify-center rounded-[5px] bg-[#808080] pb-[2px]"><Fit w={28}>Next</Fit></div>
          <div className="flex h-[28px] w-[52px] items-center justify-center rounded-[5px] bg-[#00efef] pb-[2px]"><Fit w={32}>Close</Fit></div>
        </div>
      </div>
      <svg className="absolute left-[551px] top-[-10px]" width="26" height="26" viewBox="0 0 26 26">
        <circle cx="12.8" cy="13" r="11.3" fill="#555" stroke="#aaa" strokeWidth="1.2" />
        <path d="M6.3 6.5 L19.2 19.5 M19.2 6.5 L6.3 19.5" stroke="#fff" strokeWidth="3" />
      </svg>
      <svg className="absolute left-[46px] top-[123px]" width="13" height="20" viewBox="0 0 13 20">
        <path d="M0.8 0.8 V15.5 L4 12.5 L6.5 18.3 L9 17.2 L6.5 11.6 H11Z" fill="#fff" stroke="#111" strokeWidth="1" />
      </svg>
    </div>
  );
}

function VScroll() {
  return (
    <div className="flex h-[749px] w-[15px] shrink-0 flex-col border-x border-[#a5a3a0] bg-[#dcdbd9]">
      <div className="flex h-[15px] items-center justify-center border-b border-[#a5a3a0] bg-white">
        <svg width="7" height="4" viewBox="0 0 7 4"><path d="M0 4 L3.5 0 L7 4Z" fill="#a09e9b" /></svg>
      </div>
      <div className="flex h-[535px] items-center justify-center border-b border-[#a5a3a0] bg-gradient-to-r from-[#f8f7f6] from-50% to-[#ececeb] to-50%">
        <svg width="5" height="7" viewBox="0 0 5 7"><path d="M0 .5H5 M0 3.5H5 M0 6.5H5" stroke="#a09e9b" /></svg>
      </div>
      <div className="flex-1" />
      <div className="flex h-[15px] items-center justify-center rounded-b-[3px] border-y border-[#a5a3a0] bg-white">
        <svg width="7" height="4" viewBox="0 0 7 4"><path d="M0 0 H7 L3.5 4Z" fill="#000" /></svg>
      </div>
    </div>
  );
}

function HScroll() {
  return (
    <div className="flex h-[15px] shrink-0 bg-white">
      <div className="flex w-[1425px] border-y border-[#a5a3a0] bg-[#dcdbd9]">
        <div className="flex w-[15px] items-center justify-center border-x border-[#a5a3a0] bg-white">
          <svg width="4" height="7" viewBox="0 0 4 7"><path d="M4 0 V7 L0 3.5Z" fill="#a09e9b" /></svg>
        </div>
        <div className="flex w-[1383px] items-center justify-center border-r border-[#a5a3a0] bg-gradient-to-b from-[#f8f7f6] from-50% to-[#ececeb] to-50%">
          <svg width="7" height="5" viewBox="0 0 7 5"><path d="M.5 0V5 M3.5 0V5 M6.5 0V5" stroke="#a09e9b" /></svg>
        </div>
        <div className="flex-1" />
        <div className="flex w-[15px] items-center justify-center rounded-r-[3px] border-x border-[#a5a3a0] bg-white">
          <svg width="4" height="7" viewBox="0 0 4 7"><path d="M0 0 V7 L4 3.5Z" fill="#000" /></svg>
        </div>
      </div>
    </div>
  );
}

function Taskbar() {
  return (
    <div className={"flex h-6 shrink-0 items-center overflow-hidden bg-gradient-to-b from-[#5b5953] to-[#3c3b37] text-[14.5px] leading-6 text-[#dfdbd2] " + UI}>
      <svg width="18" height="22" viewBox="0 0 18 22" className="shrink-0">
        <rect x="0.5" y="0.5" width="17" height="21" rx="3" fill="#44433e" stroke="#2d2c29" />
        <rect x="1.5" y="5" width="15" height="14" fill="#8e2c8e" />
        <rect x="1.5" y="5" width="15" height="3" fill="#eee9d8" />
        <path d="M5.5 9.5 H15 V17.5 H5.5Z" fill="#c765bc" />
        <path d="M2.5 9.5 H4.5 V11.5 H2.5Z M2.5 14 H4.5 V16 H2.5Z" fill="#eee" />
      </svg>
      <Gap w={3} />
      <svg width="4" height="10" viewBox="0 0 4 10" className="shrink-0"><path d="M0 1.5H4 M0 5H4 M0 8.5H4" stroke="#34332e" /></svg>
      <Gap w={3} />
      <div className="flex h-6 w-[202px] shrink-0 items-center bg-[#373632] pb-0.5">
        <Gap w={9} /><ChromeIcon size={15} /><Gap w={8} /><Fit w={155}>Show Unregistered A…</Fit>
      </div>
      <div className="flex h-6 w-[202px] shrink-0 items-center border-r border-[#383733] pb-0.5 font-bold">
        <Gap w={8} />
        <svg width="16" height="16" viewBox="0 0 16 16" className="shrink-0"><path d="M1 3 L3 1 H13 L15 3 V14 H1Z" fill="#8f806b" /><path d="M1 3H15V6H1Z" fill="#a59680" /><path d="M11 6 L15.5 11 H13 V15 H9 V11 H6.5Z" fill="#a0573a" /></svg>
        <Gap w={8} /><Fit w={128}>[Update Manager]</Fit>
      </div>
      <div className="flex h-6 w-[202px] shrink-0 items-center border-r border-[#383733] pb-0.5">
        <Gap w={8} /><TerminalIcon w={16} h={13} /><Gap w={8} /><Fit w={152}>chai@vm1-chai2: ~/u…</Fit>
      </div>
      <div className="flex h-6 w-[202px] shrink-0 items-center border-r border-[#383733] pb-0.5">
        <Gap w={8} />
        <svg width="16" height="16" viewBox="0 0 16 16" className="shrink-0"><rect x="0.5" y="1" width="12" height="14" fill="#f4f2ee" stroke="#aaa" /><path d="M1 1.5H13" stroke="#555" strokeDasharray="1 1" strokeWidth="2" /><path d="M3 5H10 M3 7.5H10 M3 10H7" stroke="#b9b9b9" /><path d="M4 12.5 L5 9.5 L12 2.5 L14.5 5 L7 12Z" fill="#f09a2c" stroke="#99601c" strokeWidth=".6" /><path d="M12 2.5 L14 0.7 L16 3 L14.5 5Z" fill="#d9434a" /></svg>
        <Gap w={8} /><Fit w={163}>um_home.html (~/um-…</Fit>
      </div>
      <span className="flex-1" />
      <div className="grid h-[22px] w-[35px] shrink-0 grid-cols-2 grid-rows-2 gap-px">
        <span className="border border-white bg-[#ffae8c]" /><span className="bg-[#2f2e2b]" /><span className="bg-[#2f2e2b]" /><span className="bg-[#2f2e2b]" />
      </div>
      <Gap w={5} />
      <svg width="19" height="22" viewBox="0 0 19 22" className="shrink-0">
        <path d="M1 3 H18 L16 21 H3Z" fill="#a5a7a2" stroke="#d5d6d2" />
        <ellipse cx="9.5" cy="3" rx="8.5" ry="2.3" fill="#6b6d68" stroke="#dcddd9" />
        <path d="M4 9 L8 7 L9 12 L5 13Z M11 8 L15 10 L13 14 L10 12Z M5 15 L9 14 L8 19Z M11 16 L14 15 L15 19 L11 20Z" fill="#e8e9e5" />
      </svg>
      <Gap w={3} />
    </div>
  );
}

export default function App() {
  return (
    <div className="flex h-[900px] w-[1440px] flex-col overflow-hidden bg-[#f2f1f0]">
      <SystemPanel />
      <TabStrip />
      <Toolbar />
      <Bookmarks />
      <div className="flex h-[749px] shrink-0">
        <div className={"relative h-[749px] w-[1425px] shrink-0 overflow-hidden bg-gradient-to-b from-[#7a7d7b] to-[#797877] text-[16px] " + SERIF}>
          <Foliage />
          <main className="relative ml-[110px] h-[749px] w-[1186px] bg-[#4a6564]">
            <header className="ml-5 h-[150px] w-[1125px] bg-[#575757] pl-[11px] font-bold text-[#777]">
              <div className="h-[44px] pt-[5px] text-[35px] leading-[40px] text-[#467271]"><Fit w={261}>Mneme Interface</Fit></div>
              <div className="h-[73px] pt-[6px] text-[20px] leading-[24px]"><Fit w={506}>Visualise and Control what's inside the lifelong user model</Fit></div>
              <nav className="flex pl-[50px]">
                <NavItem w={50}>HOME</NavItem>
                <NavItem w={181}>APPLICATION PLUGIN</NavItem>
                <NavItem w={74}>LOG OUT</NavItem>
                <NavItem w={44}>HELP</NavItem>
              </nav>
            </header>
            <div className="h-[65px] pl-5 pt-[6px] leading-[19px] text-[#404545]">
              <div className="h-[19px]"><Fit w={115}>Logged in as alice</Fit></div>
              <div className="h-[19px]"><Fit w={256}>You are now in: Unregistered apps Page</Fit></div>
            </div>
            <div className="flex items-start">
              <LeftColumn />
              <CenterColumn />
              <RightColumn />
            </div>
          </main>
          <Modal />
        </div>
        <VScroll />
      </div>
      <HScroll />
      <Taskbar />
    </div>
  );
}
